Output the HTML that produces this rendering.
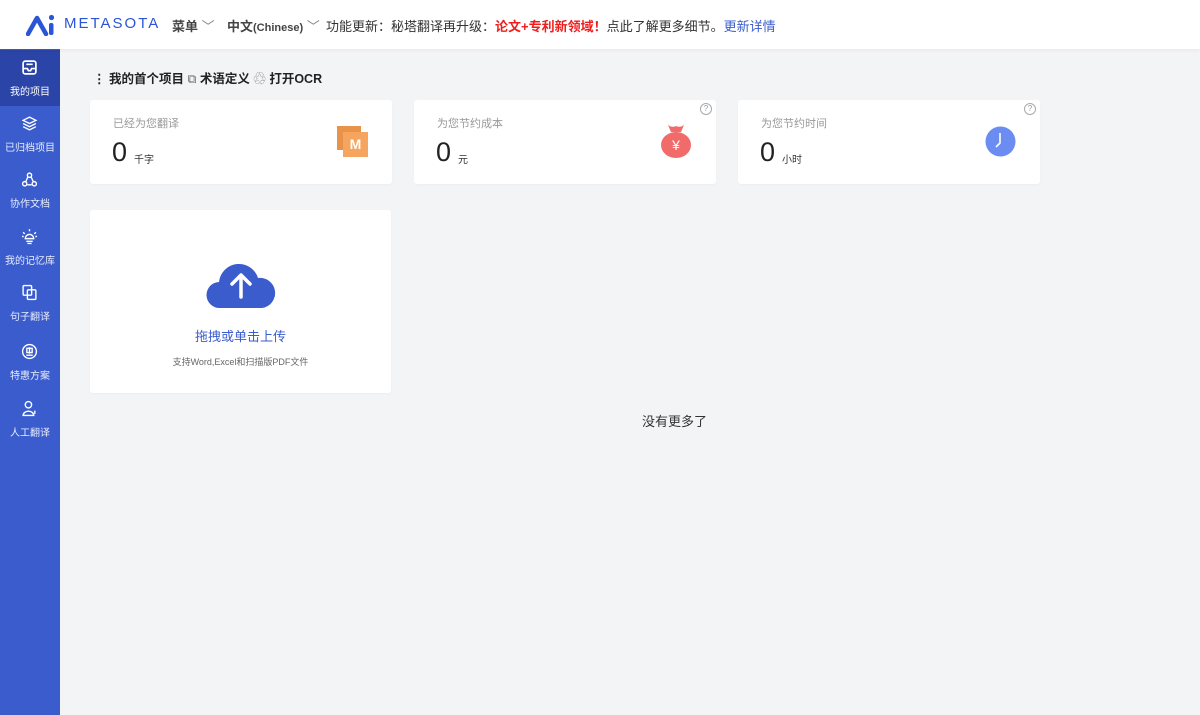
<!DOCTYPE html>
<html><head><meta charset="utf-8"><style>
*{margin:0;padding:0;box-sizing:border-box}
body{width:1200px;height:715px;background:#f3f4f6;font-family:"Liberation Sans","Noto Sans CJK SC",sans-serif;overflow:hidden;position:relative;color:#333}
.hdr{position:absolute;left:0;top:0;width:1200px;height:49px;background:#fff;box-shadow:0 1px 4px rgba(0,0,0,.06);z-index:2}
.hdr .t{position:absolute;top:16px;font-size:13px;white-space:nowrap}
.side{position:absolute;left:0;top:49px;width:60px;height:666px;background:#3a5ccc}
.it{position:absolute;left:0;width:60px;height:56px;color:#e8edff;font-size:10px;text-align:center}
.it svg{position:absolute;left:21px;top:9px}
.it span{position:absolute;left:0;width:60px;top:33px}
.card{position:absolute;background:#fff;border-radius:3px;box-shadow:0 1px 2px rgba(0,0,0,.03)}
.lab{position:absolute;left:23px;top:15px;font-size:11px;color:#999}
.num{position:absolute;left:22px;top:37px;font-size:27px;color:#222}
.unit{position:absolute;top:51px;font-size:10px;color:#333}
.q{position:absolute;right:4px;top:3px;width:12px;height:12px;border:1px solid #aaa;border-radius:50%;font-size:8px;color:#999;text-align:center;line-height:10px}
</style></head><body>
<div class="hdr">
<svg style="position:absolute;left:26px;top:14px" width="34" height="22" viewBox="0 0 34 22"><path d="M2 20 L11 4 L20 20" fill="none" stroke="#2a55d6" stroke-width="4.5" stroke-linecap="round" stroke-linejoin="round"/><rect x="23" y="9" width="4.5" height="12" rx="2" fill="#2a55d6"/><circle cx="25.5" cy="3.5" r="2.6" fill="#2a55d6"/></svg>
<div class="t" style="left:64px;top:15px;font-size:15px;color:#2a55d6;letter-spacing:2px">METASOTA</div>
<div class="t" style="left:172px;font-weight:bold;color:#444">菜单 <span style="font-weight:normal;color:#888">﹀</span></div>
<div class="t" style="left:227px;font-weight:bold;color:#444">中文<span style="font-size:11px">(Chinese)</span> <span style="font-weight:normal;color:#888">﹀</span></div>
<div class="t" style="left:326px;color:#333">功能更新：秘塔翻译再升级：<b style="color:#f01c1c">论文+专利新领域！</b>点此了解更多细节。<span style="color:#3a5ccc">更新详情</span></div>
</div>
<div class="side">
<div class="it" style="top:1px;background:#2a44a8;color:#fff"><svg width="17" height="17" viewBox="0 0 16 16" fill="none" stroke="#fff" stroke-width="1.6"><rect x="2" y="2" width="12" height="12" rx="2"/><path d="M2 9h4l1 2h2l1-2h4M5 5h6"/></svg><span>我的项目</span></div>
<div class="it" style="top:57px"><svg width="17" height="17" viewBox="0 0 16 16" fill="none" stroke="#fff" stroke-width="1.3"><path d="M8 2l6 3-6 3-6-3z M2 8l6 3 6-3 M2 11l6 3 6-3"/></svg><span>已归档项目</span></div>
<div class="it" style="top:113px"><svg width="17" height="17" viewBox="0 0 16 16" fill="none" stroke="#fff" stroke-width="1.3"><circle cx="8" cy="4" r="2"/><circle cx="3.5" cy="12" r="2"/><circle cx="12.5" cy="12" r="2"/><path d="M6.5 5.5L4.5 10M9.5 5.5l2 4.5M6 13h4"/></svg><span>协作文档</span></div>
<div class="it" style="top:170px"><svg width="17" height="17" viewBox="0 0 16 16" fill="none" stroke="#fff" stroke-width="1.3"><path d="M4 10a4 4 0 0 1 8 0zM5 12.5h6M6 14.5h4M8 1v2M2 4l1.5 1.5M14 4l-1.5 1.5M1 8h1.5M15 8h-1.5"/></svg><span>我的记忆库</span></div>
<div class="it" style="top:226px"><svg width="17" height="17" viewBox="0 0 16 16" fill="none" stroke="#fff" stroke-width="1.3"><rect x="2" y="1.5" width="8" height="9" rx="1"/><rect x="6" y="5.5" width="8" height="9" rx="1"/></svg><span>句子翻译</span></div>
<div class="it" style="top:285px"><svg width="17" height="17" viewBox="0 0 16 16" fill="none" stroke="#fff" stroke-width="1.3"><circle cx="8" cy="8" r="6.5"/><path d="M5.5 5h5v4h-5zM8 4v6M5 11.5h6"/></svg><span>特惠方案</span></div>
<div class="it" style="top:342px"><svg width="17" height="17" viewBox="0 0 16 16" fill="none" stroke="#fff" stroke-width="1.3"><circle cx="7" cy="4.5" r="3"/><path d="M2 14.5a5 4 0 0 1 10 0zM13 10v3"/></svg><span>人工翻译</span></div>
</div>
<div style="position:absolute;left:93px;top:68px;font-size:12.5px;font-weight:bold;color:#222;white-space:nowrap">⋮ 我的首个项目 <span style="color:#666;font-weight:normal">⧉</span> 术语定义 <span style="color:#666;font-weight:normal">♲</span> 打开OCR</div>
<div class="card" style="left:90px;top:100px;width:302px;height:84px"><div class="lab">已经为您翻译</div><div class="num">0</div><div class="unit" style="left:44px">千字</div>
<div style="position:absolute;left:247px;top:26px;width:24px;height:24px;background:#e8924a"></div><div style="position:absolute;left:253px;top:32px;width:25px;height:25px;background:#f6a55e;color:#fff;font-weight:bold;font-size:14px;text-align:center;line-height:25px">M</div></div>
<div class="card" style="left:414px;top:100px;width:302px;height:84px"><div class="q">?</div><div class="lab">为您节约成本</div><div class="num">0</div><div class="unit" style="left:44px">元</div>
<svg style="position:absolute;left:246px;top:23px" width="32" height="36" viewBox="0 0 32 36"><path d="M8 2 Q12 5 16 3 Q20 5 24 2 L21 9 H11z" fill="#f26b6b"/><ellipse cx="16" cy="22" rx="15" ry="13" fill="#f26b6b"/><text x="16" y="27" font-size="14" fill="#fff" text-anchor="middle" font-family="Liberation Sans">¥</text></svg></div>
<div class="card" style="left:738px;top:100px;width:302px;height:84px"><div class="q">?</div><div class="lab">为您节约时间</div><div class="num">0</div><div class="unit" style="left:44px">小时</div>
<svg style="position:absolute;left:247px;top:26px" width="31" height="31" viewBox="0 0 31 31"><circle cx="15.5" cy="15.5" r="15" fill="#6b8df2"/><path d="M15 7v10l-4 4" fill="none" stroke="#fff" stroke-width="1.6"/></svg></div>
<div class="card" style="left:90px;top:210px;width:301px;height:183px">
<svg style="position:absolute;left:116px;top:51px" width="70" height="48" viewBox="0 0 70 48"><path d="M14 47a13 13 0 0 1-1-26 20 20 0 0 1 39-4 15 15 0 0 1 4 30z" fill="#3a5ccc"/><path d="M35 36V14M26 23l9-9 9 9" fill="none" stroke="#fff" stroke-width="3.5" stroke-linecap="round" stroke-linejoin="round"/></svg>
<div style="position:absolute;left:0;width:301px;top:116px;text-align:center;font-size:13px;color:#3a5ccc">拖拽或单击上传</div>
<div style="position:absolute;left:0;width:301px;top:145px;text-align:center;font-size:9px;color:#666">支持Word,Excel和扫描版PDF文件</div>
</div>
<div style="position:absolute;left:642px;top:411px;font-size:13px;color:#333">没有更多了</div>
</body></html>
